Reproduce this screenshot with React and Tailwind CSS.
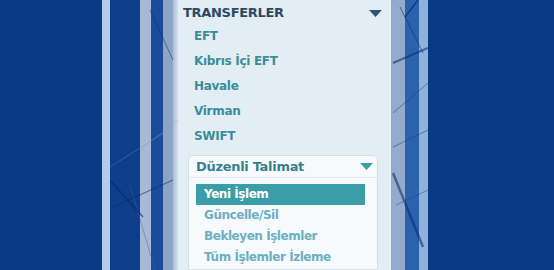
import React from 'react';

const FONT = { fontFamily: '"DejaVu Sans", Verdana, sans-serif' };

const TRANSFERS = ['EFT', 'Kıbrıs İçi EFT', 'Havale', 'Virman', 'SWIFT'];
const TALIMAT = ['Yeni İşlem', 'Güncelle/Sil', 'Bekleyen İşlemler', 'Tüm İşlemler İzleme'];

// thin diagonal strokes that run across the stripe groups
function LeftLines() {
  return (
    <svg className="absolute inset-0 w-full h-full" viewBox="0 0 68 270" preserveAspectRatio="none">
      <line x1="40" y1="10" x2="63" y2="60" stroke="#0a3170" strokeWidth="1" opacity="0.5" />
      <line x1="0" y1="167" x2="63" y2="127" stroke="#7f9cc6" strokeWidth="1" opacity="0.35" />
      <line x1="0" y1="180" x2="33" y2="217" stroke="#082a66" strokeWidth="1.5" opacity="0.6" />
      <line x1="3" y1="207" x2="63" y2="180" stroke="#082a66" strokeWidth="1.2" opacity="0.5" />
      <line x1="20" y1="185" x2="45" y2="270" stroke="#3f5f96" strokeWidth="1" opacity="0.4" />
      <line x1="30" y1="150" x2="68" y2="120" stroke="#a89a94" strokeWidth="1" opacity="0.3" />
    </svg>
  );
}

function RightLines() {
  return (
    <svg className="absolute inset-0 w-full h-full" viewBox="0 0 37 270" preserveAspectRatio="none">
      <line x1="14" y1="17" x2="27" y2="0" stroke="#0a2f70" strokeWidth="1.5" opacity="0.7" />
      <line x1="9" y1="7" x2="32" y2="53" stroke="#0a2f70" strokeWidth="1" opacity="0.6" />
      <line x1="2" y1="63" x2="37" y2="48" stroke="#0a2f70" strokeWidth="2" opacity="0.6" />
      <line x1="2" y1="113" x2="37" y2="83" stroke="#1d3f7a" strokeWidth="1" opacity="0.5" />
      <line x1="2" y1="147" x2="37" y2="130" stroke="#1d3f7a" strokeWidth="1" opacity="0.5" />
      <line x1="2" y1="173" x2="32" y2="247" stroke="#0a2a66" strokeWidth="2.5" opacity="0.55" />
      <line x1="5" y1="205" x2="37" y2="190" stroke="#1d3f7a" strokeWidth="1" opacity="0.4" />
    </svg>
  );
}

function Caret({ color }) {
  return (
    <svg width="13" height="7" viewBox="0 0 13 7" className="block">
      <path d="M0 0 H13 L6.5 7 Z" fill={color} />
    </svg>
  );
}

export default function App() {
  return (
    <div className="w-[554px] h-[270px] flex overflow-hidden bg-[#0a3a84]" style={FONT}>
      <div className="w-[102px] shrink-0 bg-[#0a3a84]" />
      <div className="w-[8px] shrink-0 bg-[#b2cdee]" />
      <div className="relative w-[68px] shrink-0 flex">
        <div className="w-[30px] bg-[#0e3d8b]" />
        <div className="w-[11px] bg-[#a6b9d5]" />
        <div className="w-[12px] bg-[#1b4b9b]" />
        <div className="w-[10px] bg-[#8da4c5]" />
        <div className="w-[5px] bg-gradient-to-r from-[#aabed8] to-[#d2e0ec]" />
        <LeftLines />
      </div>

      <div className="w-[213px] shrink-0 bg-[#e2edf4] flex flex-col">
        <div className="h-[24px] pt-[2px] pl-[5px] pr-[9px] flex items-start justify-between">
          <span className="text-[13px] leading-[22px] font-bold text-[#2d4a64] tracking-[-0.3px]">TRANSFERLER</span>
          <div className="pt-[8px]">
            <Caret color="#2f5573" />
          </div>
        </div>

        <ul className="pl-[16px]">
          {TRANSFERS.map((t) => (
            <li key={t} className="h-[25px] text-[12px] leading-[25px] font-bold text-[#3b8d9b] tracking-[-0.3px]">
              {t}
            </li>
          ))}
        </ul>

        <div className="mt-[6px] ml-[10px] mr-[13px] flex-1 bg-[#f6fafc] border border-[#d3e0e8] rounded-t-[5px]">
          <div className="h-[22px] pl-[7px] pr-[4px] flex items-start justify-between border-b border-[#dfe9ef]">
            <span className="text-[13px] leading-[21px] font-bold text-[#3a7f8d] tracking-[-0.3px]">Düzenli Talimat</span>
            <div className="pt-[7px]">
              <Caret color="#3a9ea6" />
            </div>
          </div>
          <ul className="mt-[6px] ml-[7px] mr-[12px]">
            {TALIMAT.map((t, i) => (
              <li
                key={t}
                className={`h-[21px] pl-[8px] text-[12px] leading-[21px] font-bold tracking-[-0.45px] ${
                  i === 0 ? 'bg-[#3b9ea6] text-white' : 'text-[#6cb0c1]'
                }`}
              >
                {t}
              </li>
            ))}
          </ul>
        </div>
      </div>

      <div className="relative w-[37px] shrink-0 flex">
        <div className="w-[14px] bg-[#95abcc]" />
        <div className="w-[14px] bg-[#2c62ac]" />
        <div className="w-[9px] bg-[#90b1dc]" />
        <RightLines />
      </div>
      <div className="flex-1 bg-[#0a3a84]" />
    </div>
  );
}
